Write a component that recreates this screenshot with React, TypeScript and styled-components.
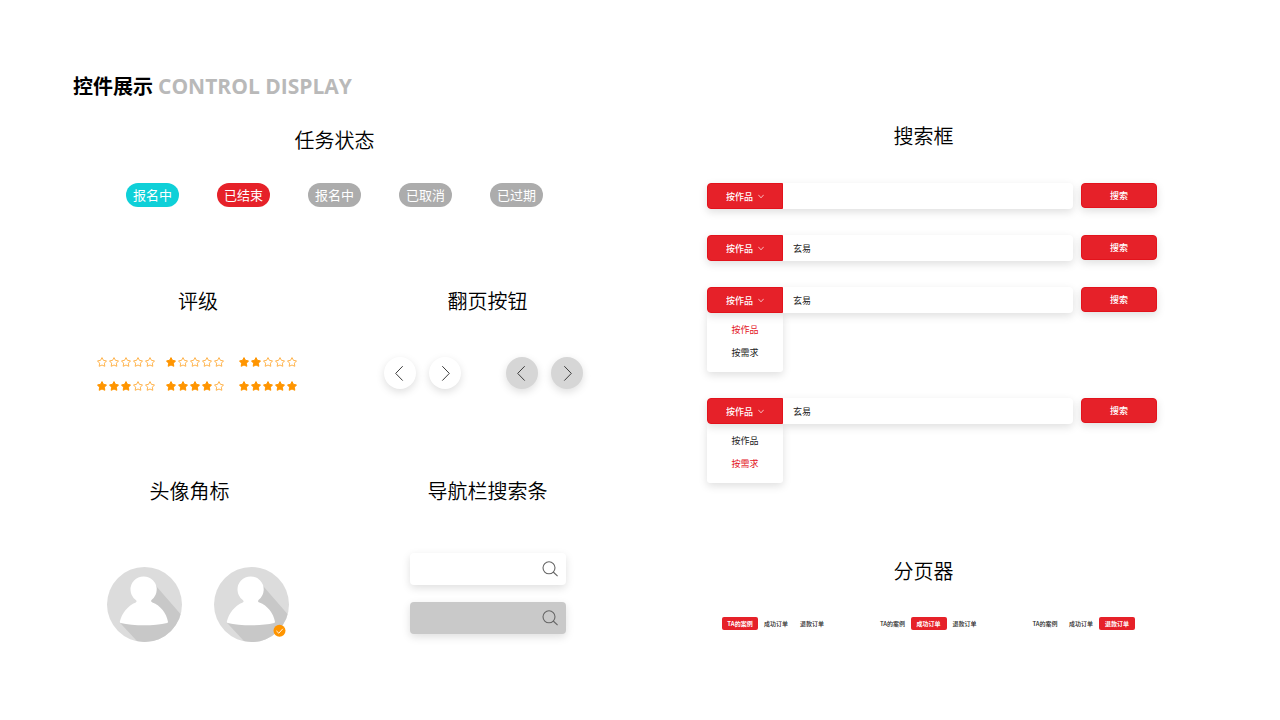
import React from "react";
import styled, { createGlobalStyle, css } from "styled-components";

const color = {
  red: "#e62129",
  redEdge: "#e3131c",
  cyan: "#0fd0d8",
  grey: "#acacac",
  orange: "#ff9500",
  ink: "#222222",
};

const softShadow = "0 3px 8px rgba(0, 0, 0, 0.13)";

const GlobalStyle = createGlobalStyle`
  *, *::before, *::after { box-sizing: border-box; }
  body {
    margin: 0;
    background: #ffffff;
    color: #000000;
    font-family: "Noto Sans CJK SC", sans-serif;
  }
  button, input, select { font: inherit; color: inherit; border: 0; margin: 0; padding: 0; }
  button { cursor: pointer; }
  h1, h2, ul { margin: 0; padding: 0; font-size: inherit; font-weight: inherit; }
  ul { list-style: none; }
  svg { display: block; }
`;

const Page = styled.main`
  padding: 71px 123px 71px 73px;
`;

const PageTitle = styled.h1`
  display: flex;
  align-items: center;
  gap: 5px;
  height: 30px;
  font-size: 20px;
  line-height: 30px;
  font-weight: 700;
`;

const PageSubtitle = styled.span`
  font-family: "Open Sans", sans-serif;
  font-size: 21px;
  font-weight: 700;
  color: #b9b9b9;
`;

const Columns = styled.div`
  display: grid;
  grid-template-columns: 523fr 450fr;
  column-gap: 111px;
`;

const LeftColumn = styled.div`
  display: flex;
  flex-direction: column;
  padding-top: 24px;
`;

const RightColumn = styled.div`
  display: flex;
  flex-direction: column;
  gap: 73px;
  padding-top: 20px;
`;

const SplitRow = styled.div<{ $top: number }>`
  display: grid;
  grid-template-columns: 250fr 217fr;
  column-gap: 56px;
  margin-top: ${(p) => p.$top}px;
`;

const Section = styled.section<{ $gap: number }>`
  display: flex;
  flex-direction: column;
  gap: ${(p) => p.$gap}px;
`;

const Heading = styled.h2<{ $inset?: boolean }>`
  padding-right: ${(p) => (p.$inset ? 17 : 0)}px;
  font-size: 20px;
  line-height: 30px;
  font-weight: 350;
  text-align: center;
`;

const StatusList = styled.ul`
  display: flex;
  justify-content: center;
  gap: 38px;
`;

const StatusPill = styled.li<{ $tone: string }>`
  width: 53px;
  height: 24px;
  border-radius: 12px;
  background: ${(p) => p.$tone};
  color: #ffffff;
  font-size: 13px;
  line-height: 23px;
  text-align: center;
`;

const RatingGrid = styled.div`
  display: grid;
  grid-template-columns: 69px 73px 60px;
  row-gap: 14px;
  justify-content: center;
`;

const Stars = styled.div`
  display: flex;
  gap: 2px;
`;

const PagerPairs = styled.div`
  display: flex;
  gap: 45px;
  padding-left: 5px;
`;

const PagerPair = styled.div`
  display: flex;
  gap: 13px;
`;

const RoundButton = styled.button<{ $filled?: boolean }>`
  display: flex;
  align-items: center;
  justify-content: center;
  width: 32px;
  height: 32px;
  border-radius: 50%;
  background: ${(p) => (p.$filled ? "#d6d6d6" : "#ffffff")};
  box-shadow: ${softShadow};
`;

const AvatarRow = styled.div`
  display: flex;
  justify-content: center;
  gap: 32px;
`;

const NavSearchList = styled.div`
  display: flex;
  flex-direction: column;
  align-items: center;
  gap: 17px;
`;

const NavSearch = styled.label<{ $filled?: boolean }>`
  display: flex;
  align-items: center;
  width: 156px;
  height: 32px;
  padding: 0 8px;
  border-radius: 4px;
  background: ${(p) => (p.$filled ? "#c9c9c9" : "#ffffff")};
  box-shadow: ${softShadow};
`;

const NavInput = styled.input`
  flex: 1;
  min-width: 0;
  background: transparent;
  font-size: 12px;
  outline: none;
`;

const SearchList = styled.div`
  display: flex;
  flex-direction: column;
  gap: 26px;
`;

const SearchForm = styled.form`
  display: flex;
  align-items: flex-start;
  gap: 8px;
  font-size: 9px;
`;

const SearchBox = styled.div`
  flex: 1;
  display: flex;
  height: 26px;
  border-radius: 4px;
  background: #ffffff;
  box-shadow: ${softShadow};
`;

const redSurface = css`
  background: ${color.red};
  border: 1px solid ${color.redEdge};
  color: #ffffff;
`;

const SelectWrap = styled.div`
  position: relative;
  width: 76px;
`;

const TypeSelect = styled.select`
  ${redSurface}
  appearance: none;
  width: 100%;
  height: 26px;
  padding: 0 18px;
  border-radius: 4px 0 0 4px;
  font-weight: 500;
`;

const SelectArrow = styled.svg`
  position: absolute;
  top: 11px;
  right: 19px;
  pointer-events: none;
`;

const QueryInput = styled.input`
  flex: 1;
  min-width: 0;
  height: 26px;
  padding: 0 10px;
  border-radius: 0 4px 4px 0;
  background: transparent;
  color: ${color.ink};
  outline: none;
`;

const SubmitButton = styled.button`
  ${redSurface}
  width: 76px;
  height: 25px;
  border-radius: 4px;
  font-weight: 500;
  box-shadow: ${softShadow};
`;

const OptionMenu = styled.ul`
  width: 76px;
  height: 59px;
  padding: 5px 0 8px;
  border-radius: 0 0 3px 3px;
  background: #ffffff;
  box-shadow: ${softShadow};
  font-size: 9px;
`;

const OptionButton = styled.button<{ $active: boolean }>`
  display: block;
  width: 100%;
  height: 23px;
  background: transparent;
  color: ${(p) => (p.$active ? color.redEdge : color.ink)};
  text-align: center;
`;

const TabGroups = styled.div`
  display: flex;
  justify-content: space-between;
  padding: 0 22px 0 15px;
`;

const TabGroup = styled.div`
  display: flex;
`;

const Tab = styled.button<{ $active: boolean }>`
  width: 36px;
  height: 13px;
  border-radius: 2px;
  background: ${(p) => (p.$active ? color.red : "transparent")};
  color: ${(p) => (p.$active ? "#ffffff" : color.ink)};
  font-size: 6px;
  line-height: 13px;
  font-weight: ${(p) => (p.$active ? 700 : 500)};
  white-space: nowrap;
`;

const Star = ({ on }: { on: boolean }) => (
  <svg width="10" height="10" viewBox="0 0 20 20" aria-hidden="true">
    <path
      d="M10 1.2 L12.9 6.7 L19 7.8 L14.8 12.4 L15.6 18.6 L10 16 L4.4 18.6 L5.2 12.4 L1 7.8 L7.1 6.7 Z"
      fill={on ? color.orange : "none"}
      stroke={on ? color.orange : "#ffab3a"}
      strokeWidth={on ? 2 : 1.8}
      strokeLinejoin="round"
    />
  </svg>
);

const Rating = ({ value }: { value: number }) => (
  <Stars role="img" aria-label={`${value} / 5`}>
    {[0, 1, 2, 3, 4].map((i) => (
      <Star key={i} on={i < value} />
    ))}
  </Stars>
);

const Chevron = ({ next }: { next?: boolean }) => (
  <svg width="16" height="16" viewBox="0 0 16 16" fill="none" stroke="#3c3c3c" strokeWidth="1" aria-hidden="true">
    <path d={next ? "M5.3 1.2 L12.3 8.4 L5.3 15.6" : "M10.7 1.2 L3.7 8.4 L10.7 15.6"} />
  </svg>
);

const Magnifier = () => (
  <svg width="16" height="16" viewBox="0 0 16 16" fill="none" stroke="#666666" strokeWidth="1.1" aria-hidden="true">
    <circle cx="7" cy="6.8" r="6" />
    <path d="M11.2 11 L15.6 15.2" />
  </svg>
);

const Avatar = ({ id, verified }: { id: string; verified?: boolean }) => (
  <svg width="75" height="75" viewBox="0 0 75 75" role="img" aria-label="头像">
    <clipPath id={id}>
      <circle cx="37.5" cy="37.5" r="37.5" />
    </clipPath>
    <g clipPath={`url(#${id})`}>
      <rect width="75" height="75" fill="#dcdcdc" />
      <path d="M46.5 16 L80 54.5 V80 H35.5 L12.7 55.5 L30 40 Z" fill="#c8c8c8" />
    </g>
    <path
      d="M28.8 35.4 C30.2 34.8 29.6 33.8 28.2 32.6 A13.1 13.1 0 1 1 45 32.6 C43.8 33.8 43.6 34.8 45.4 35.4 C53.5 38.5 59.5 46 61 54.8 Q61.1 55.6 60.2 55.9 C47 59 27 59 13.6 55.9 Q12.6 55.6 12.8 54.8 C14.8 46 21 38.5 28.8 35.4 Z"
      fill="#ffffff"
    />
    {verified && (
      <>
        <circle cx="65.5" cy="63.8" r="6" fill={color.orange} />
        <path d="M62.4 63.9 L64.8 66.2 L68.8 61.8" fill="none" stroke="#ffffff" strokeWidth="0.9" />
      </>
    )}
  </svg>
);

const statuses = [
  { text: "报名中", tone: color.cyan },
  { text: "已结束", tone: color.red },
  { text: "报名中", tone: color.grey },
  { text: "已取消", tone: color.grey },
  { text: "已过期", tone: color.grey },
];

const searchTypes = ["按作品", "按需求"];
const tabs = ["TA的案例", "成功订单", "退款订单"];

const searches: { query: string; open?: number }[] = [
  { query: "" },
  { query: "玄易" },
  { query: "玄易", open: 0 },
  { query: "玄易", open: 1 },
];

const Search = ({ query, open }: { query: string; open?: number }) => (
  <div>
    <SearchForm onSubmit={(e) => e.preventDefault()}>
      <SearchBox>
        <SelectWrap>
          <TypeSelect aria-label="搜索类型" defaultValue="按作品">
            {searchTypes.map((t) => (
              <option key={t}>{t}</option>
            ))}
          </TypeSelect>
          <SelectArrow width="6" height="5" viewBox="0 0 6 5" fill="none" stroke="#ffffff" strokeWidth="0.7" aria-hidden="true">
            <path d="M0.3 0.8 L3 3.8 L5.7 0.8" />
          </SelectArrow>
        </SelectWrap>
        <QueryInput aria-label="搜索内容" defaultValue={query} />
      </SearchBox>
      <SubmitButton type="submit">搜索</SubmitButton>
    </SearchForm>
    {open !== undefined && (
      <OptionMenu>
        {searchTypes.map((t, i) => (
          <li key={t}>
            <OptionButton type="button" $active={i === open}>
              {t}
            </OptionButton>
          </li>
        ))}
      </OptionMenu>
    )}
  </div>
);

export default function App() {
  return (
    <Page lang="zh-CN">
      <GlobalStyle />
      <PageTitle>
        控件展示
        <PageSubtitle>CONTROL DISPLAY</PageSubtitle>
      </PageTitle>
      <Columns>
        <LeftColumn>
          <Section $gap={28}>
            <Heading>任务状态</Heading>
            <StatusList>
              {statuses.map((s, i) => (
                <StatusPill key={i} $tone={s.tone}>
                  {s.text}
                </StatusPill>
              ))}
            </StatusList>
          </Section>

          <SplitRow $top={79}>
            <Section $gap={41}>
              <Heading>评级</Heading>
              <RatingGrid>
                {[0, 1, 2, 3, 4, 5].map((v) => (
                  <Rating key={v} value={v} />
                ))}
              </RatingGrid>
            </Section>
            <Section $gap={41}>
              <Heading>翻页按钮</Heading>
              <PagerPairs>
                {[false, true].map((filled) => (
                  <PagerPair key={String(filled)}>
                    <RoundButton type="button" aria-label="上一页" $filled={filled}>
                      <Chevron />
                    </RoundButton>
                    <RoundButton type="button" aria-label="下一页" $filled={filled}>
                      <Chevron next />
                    </RoundButton>
                  </PagerPair>
                ))}
              </PagerPairs>
            </Section>
          </SplitRow>

          <SplitRow $top={85}>
            <Section $gap={61}>
              <Heading $inset>头像角标</Heading>
              <AvatarRow>
                <Avatar id="avatar-plain" />
                <Avatar id="avatar-verified" verified />
              </AvatarRow>
            </Section>
            <Section $gap={47}>
              <Heading>导航栏搜索条</Heading>
              <NavSearchList>
                <NavSearch>
                  <NavInput type="text" aria-label="搜索" />
                  <Magnifier />
                </NavSearch>
                <NavSearch $filled>
                  <NavInput type="text" aria-label="搜索" />
                  <Magnifier />
                </NavSearch>
              </NavSearchList>
            </Section>
          </SplitRow>
        </LeftColumn>

        <RightColumn>
          <Section $gap={32}>
            <Heading $inset>搜索框</Heading>
            <SearchList>
              {searches.map((s, i) => (
                <Search key={i} {...s} />
              ))}
            </SearchList>
          </Section>
          <Section $gap={31}>
            <Heading $inset>分页器</Heading>
            <TabGroups>
              {[0, 1, 2].map((active) => (
                <TabGroup key={active}>
                  {tabs.map((t, i) => (
                    <Tab key={t} type="button" $active={i === active}>
                      {t}
                    </Tab>
                  ))}
                </TabGroup>
              ))}
            </TabGroups>
          </Section>
        </RightColumn>
      </Columns>
    </Page>
  );
}
